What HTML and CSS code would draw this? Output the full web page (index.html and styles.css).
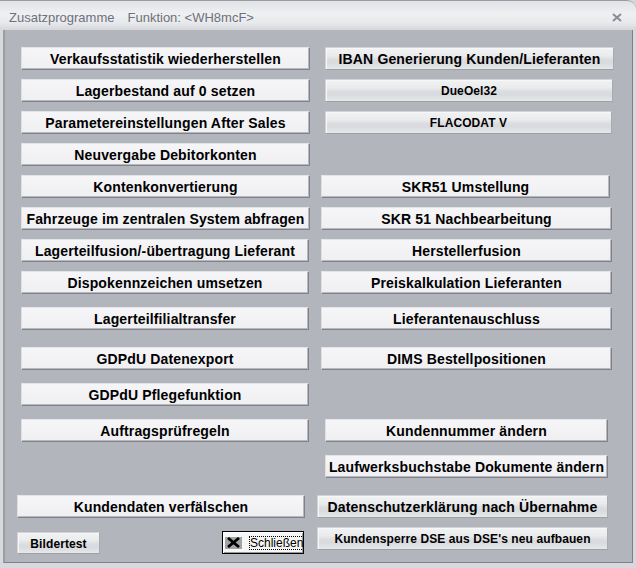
FILE: index.html
```html
<!DOCTYPE html>
<html lang="de">
<head>
<meta charset="utf-8">
<title>Zusatzprogramme</title>
<link rel="stylesheet" href="styles.css">
</head>
<body>
<div class="window">
  <div class="titlebar">
    <span class="title">Zusatzprogramme</span>
    <span class="title func">Funktion: &lt;WH8mcF&gt;</span>
    <svg class="close-x" width="10" height="9" viewBox="0 0 10 9"><path d="M1 1 L9 8 M9 1 L1 8" stroke="#8b8d94" stroke-width="2" fill="none"/></svg>
  </div>
  <div class="frame">
    <div class="client">
      <div class="row">
        <div class="btn w289">Verkaufsstatistik wiederherstellen</div>
        <div class="btn g w289 m15">IBAN Generierung Kunden/Lieferanten</div>
      </div>
      <div class="row">
        <div class="btn w289">Lagerbestand auf 0 setzen</div>
        <div class="btn g small w288 m15">DueOel32</div>
      </div>
      <div class="row">
        <div class="btn w289">Parametereinstellungen After Sales</div>
        <div class="btn g small w287 m15">FLACODAT V</div>
      </div>
      <div class="row">
        <div class="btn w289">Neuvergabe Debitorkonten</div>
      </div>
      <div class="row">
        <div class="btn w289">Kontenkonvertierung</div>
        <div class="btn w289 m11">SKR51 Umstellung</div>
      </div>
      <div class="row">
        <div class="btn w289">Fahrzeuge im zentralen System abfragen</div>
        <div class="btn w291 m11">SKR 51 Nachbearbeitung</div>
      </div>
      <div class="row">
        <div class="btn w288">Lagerteilfusion/-übertragung Lieferant</div>
        <div class="btn w291 m12">Herstellerfusion</div>
      </div>
      <div class="row">
        <div class="btn w288">Dispokennzeichen umsetzen</div>
        <div class="btn w291 m12">Preiskalkulation Lieferanten</div>
      </div>
      <div class="row gap13">
        <div class="btn w288">Lagerteilfilialtransfer</div>
        <div class="btn w291 m12">Lieferantenauschluss</div>
      </div>
      <div class="row gap17">
        <div class="btn w288">GDPdU Datenexport</div>
        <div class="btn w291 m12">DIMS Bestellpositionen</div>
      </div>
      <div class="row gap13">
        <div class="btn w288">GDPdU Pflegefunktion</div>
      </div>
      <div class="row gap13">
        <div class="btn w288">Auftragsprüfregeln</div>
        <div class="btn w283 m16">Kundennummer ändern</div>
      </div>
      <div class="row gap13">
        <div class="btn w283 m304">Laufwerksbuchstabe Dokumente ändern</div>
      </div>
      <div class="row gap17 bottom">
        <div class="btn w288">Kundendaten verfälschen</div>
        <div class="btn g w291 m12">Datenschutzerklärung nach Übernahme</div>
      </div>
      <div class="row bottom last">
        <div class="left-pair">
          <div class="btn g small bilder">Bildertest</div>
          <div class="close-btn">
            <span class="xicon"><svg width="15" height="11" viewBox="0 0 15 11"><path d="M2 1 L13 10 M13 1 L2 10" stroke="#000" stroke-width="2.8" fill="none"/></svg></span>
            <span class="close-label">Schließen</span>
          </div>
        </div>
        <div class="btn g small w291 m12">Kundensperre DSE aus DSE's neu aufbauen</div>
      </div>
    </div>
  </div>
</div>
</body>
</html>
```

FILE: styles.css
```css
html, body {
  margin: 0;
  padding: 0;
  background: #b3b5bc;
}

.window {
  width: 636px;
  height: 568px;
  overflow: hidden;
  display: flex;
  flex-direction: column;
  font-family: "Liberation Sans", Arial, sans-serif;
  background: #d6d7da;
}

.titlebar {
  flex: 0 0 30px;
  height: 30px;
  box-sizing: border-box;
  border-top: 1px solid #9a9ca2;
  border-top-right-radius: 9px;
  background: linear-gradient(to bottom, #e2e3e6 0%, #eef0f2 45%, #e8e9ec 75%, #d4d6da 100%);
  display: flex;
  align-items: center;
  padding-left: 9px;
}

.title {
  font-size: 13px;
  color: #6e717a;
  padding-top: 4px;
}

.func {
  margin-left: 13px;
}

.close-x {
  margin-left: auto;
  margin-right: 14px;
  margin-top: 3px;
}

.frame {
  flex: 1;
  display: flex;
  border-left: 3px solid #d8d9dc;
  border-right: 3px solid #d8d9dc;
  border-bottom: 5px solid #d8d9dc;
}

.client {
  flex: 1;
  background: #b3b5bc;
  border-left: 2px solid #9c9ea5;
  border-right: 1px solid #7f8188;
  border-bottom: 1px solid #7f8188;
  padding: 17px 0 0 16px;
  display: flex;
  flex-direction: column;
}

.row {
  display: flex;
  height: 23px;
  margin-top: 9px;
}

.row:first-child {
  margin-top: 0;
}

.row.gap13 { margin-top: 13px; }
.row.gap17 { margin-top: 17px; }

.row.bottom {
  margin-left: -4px;
}

.row.last {
  height: 27px;
  margin-top: 9px;
  align-items: flex-start;
}

.btn {
  box-sizing: border-box;
  height: 23px;
  display: flex;
  align-items: center;
  justify-content: center;
  white-space: nowrap;
  font-size: 14px;
  font-weight: bold;
  letter-spacing: 0.15px;
  color: #000;
  background: linear-gradient(to bottom, #f6f6f8 0%, #efeff2 100%);
  border-top: 1px solid #e4e5e8;
  border-left: 1px solid #dfe0e3;
  border-right: 1px solid #80828a;
  border-bottom: 1px solid #80828a;
  box-shadow: inset -1px -1px 0 #b7b9bf;
  padding-top: 1px;
}

.btn.g {
  background: linear-gradient(to bottom, #f1f2f3 0%, #ebeced 35%, #dcdde0 55%, #d9dadd 70%, #e6e7e9 100%);
  border-top: 1px solid #d2d3d6;
  border-left: 1px solid #d2d3d6;
  border-right: 1px solid #a9abb0;
  border-bottom: 1px solid #9ea0a6;
  box-shadow: inset 1px 1px 0 #f7f7f8;
}

.btn.small {
  font-size: 12px;
  letter-spacing: 0.1px;
}

.w283 { width: 283px; }
.w287 { width: 287px; }
.w288 { width: 288px; }
.w289 { width: 289px; }
.w291 { width: 291px; }

.m11 { margin-left: 11px; }
.m12 { margin-left: 12px; }
.m15 { margin-left: 15px; }
.m16 { margin-left: 16px; }
.m304 { margin-left: 304px; }

.left-pair {
  width: 288px;
  height: 27px;
  display: flex;
  align-items: flex-end;
  justify-content: space-between;
}

.bilder {
  width: 83px;
  height: 22px;
}

.close-btn {
  box-sizing: border-box;
  width: 82px;
  height: 23px;
  margin-right: 1px;
  background: #f6f6f6;
  border: 1px solid #000;
  box-shadow: inset 1px 1px 0 #ffffff, inset -1px -1px 0 #9a9a9a;
  display: flex;
  align-items: center;
  padding-left: 2px;
  overflow: hidden;
}

.xicon {
  flex: 0 0 17px;
  width: 17px;
  height: 12px;
  background: #a3a4a8;
  display: flex;
  align-items: center;
  justify-content: center;
}

.close-label {
  margin-left: 7px;
  font-size: 12px;
  color: #000;
  outline: 1px dotted #000;
  outline-offset: -1px;
  padding: 1px 1px 0;
  line-height: 13px;
  white-space: nowrap;
}
```
